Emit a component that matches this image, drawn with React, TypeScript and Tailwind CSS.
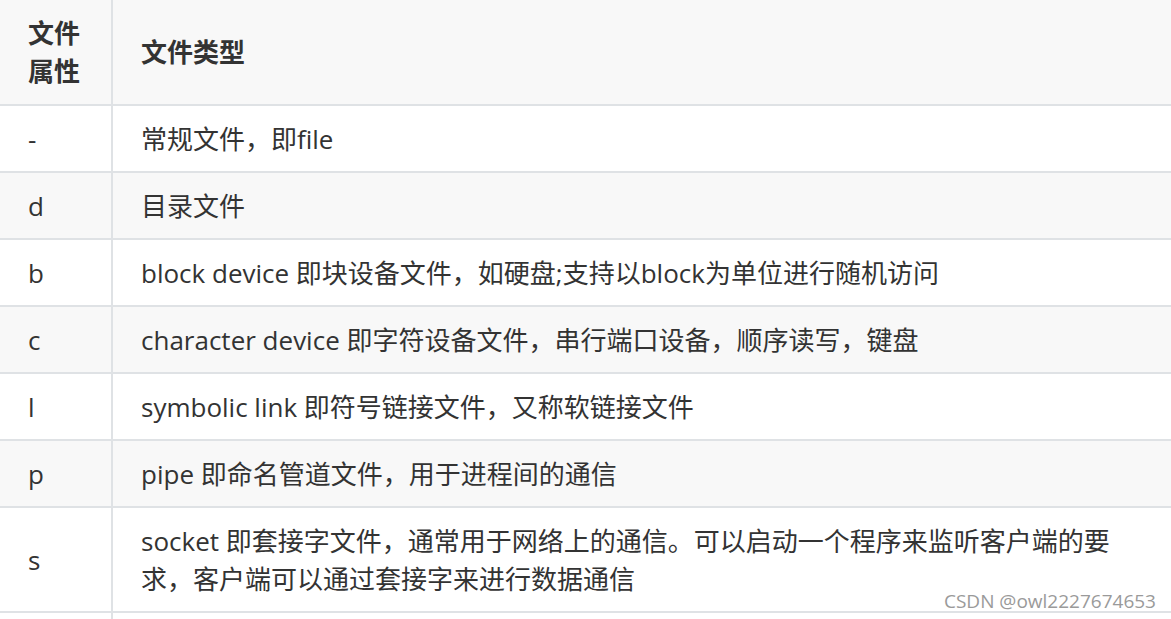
import React from 'react';

const rows: { attr: string; type: React.ReactNode }[] = [
  { attr: '-', type: '常规文件，即file' },
  { attr: 'd', type: '目录文件' },
  { attr: 'b', type: 'block device 即块设备文件，如硬盘;支持以block为单位进行随机访问' },
  { attr: 'c', type: 'character device 即字符设备文件，串行端口设备，顺序读写，键盘' },
  { attr: 'l', type: 'symbolic link 即符号链接文件，又称软链接文件' },
  { attr: 'p', type: 'pipe 即命名管道文件，用于进程间的通信' },
  {
    attr: 's',
    type: (
      <>
        socket 即套接字文件，通常用于网络上的通信。可以启动一个程序来监听客户端的要
        <br />
        求，客户端可以通过套接字来进行数据通信
      </>
    ),
  },
];

const App = () => {
  return (
    <div
      className="relative w-[1171px] h-[619px] overflow-hidden bg-white text-[#333333]"
      style={{ fontFamily: '"Open Sans", "Noto Sans CJK SC", sans-serif' }}
    >
      <table className="w-[1171px] border-collapse text-[26px] leading-[38px]">
        <thead>
          <tr className="bg-[#f8f8f8]">
            <th className="w-[112px] border-r-2 border-b-2 border-[#dfe2e5] px-[28px] py-[14px] text-left font-bold">
              文件
              <br />
              属性
            </th>
            <th className="border-b-2 border-[#dfe2e5] px-[28px] py-[14px] text-left font-bold">文件类型</th>
          </tr>
        </thead>
        <tbody>
          {rows.map((r, i) => (
            <tr key={r.attr} className={i % 2 === 1 ? 'bg-[#f8f8f8]' : 'bg-white'}>
              <td className="border-r-2 border-b-2 border-[#dfe2e5] px-[28px] py-[13.5px] align-middle">{r.attr}</td>
              <td className="border-b-2 border-[#dfe2e5] px-[28px] py-[13.5px] align-middle">{r.type}</td>
            </tr>
          ))}
          <tr>
            <td className="border-r-2 border-[#dfe2e5] h-[20px]"></td>
            <td></td>
          </tr>
        </tbody>
      </table>

      {/* watermark */}
      <div className="absolute right-[15px] top-[588px] text-[19px] leading-[26px] text-[#9a9a9a]">
        CSDN @owl2227674653
      </div>
    </div>
  );
};

export default App;
